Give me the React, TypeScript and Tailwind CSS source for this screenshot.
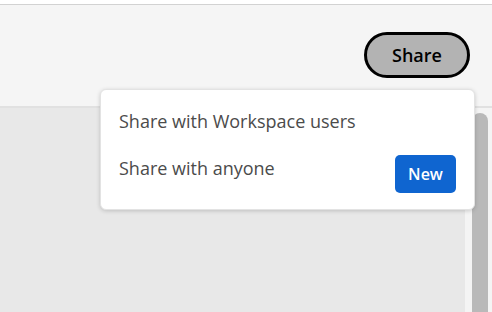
import React from 'react'

const font = { fontFamily: '"Open Sans", "Noto Sans", sans-serif' }

function ShareMenu() {
  return (
    <div className="absolute left-[100px] top-[89px] w-[375px] rounded-[6px] bg-white pt-[7px] pb-[16px] pl-[18px] pr-[18px] shadow-[0_1px_4px_rgba(0,0,0,0.18)] border border-[#e3e3e3]">
      <div className="flex h-[48px] items-center text-[18px] text-[#4b4b4b]">
        Share with Workspace users
      </div>
      <div className="flex h-[48px] items-center justify-between text-[18px] text-[#4b4b4b]">
        <span className="-mt-[1px]">Share with anyone</span>
        <span className="mt-[10px] flex h-[38px] w-[61px] items-center justify-center rounded-[5px] bg-[#0f65d0] text-[16px] font-semibold text-white">
          New
        </span>
      </div>
    </div>
  )
}

export default function App() {
  return (
    <div className="relative flex h-[312px] w-[492px] flex-col overflow-hidden bg-white" style={font}>
      {/* top bar */}
      <div className="h-[4px] shrink-0 bg-white" />
      <div className="flex h-[102px] shrink-0 items-start justify-end border-t border-[#d2d2d2] bg-[#f5f5f5] pr-[22px] pt-[27px]">
        <button className="flex h-[46px] w-[106px] items-center justify-center rounded-full border-[3px] border-black bg-[#b3b3b3] text-[18px] font-semibold text-black">
          Share
        </button>
      </div>
      <div className="h-[2px] shrink-0 bg-[#e1e1e1]" />

      {/* body + scrollbar */}
      <div className="flex min-h-0 flex-1 overflow-hidden">
        <div className="flex-1 bg-[#e8e8e8]" />
        <div className="flex w-[27px] bg-[#f4f4f4] pl-[7px] pr-[4px] pt-[5px]">
          <div className="h-[260px] w-[16px] shrink-0 rounded-t-full bg-[#b9b9b9]" />
        </div>
      </div>

      <ShareMenu />
    </div>
  )
}
